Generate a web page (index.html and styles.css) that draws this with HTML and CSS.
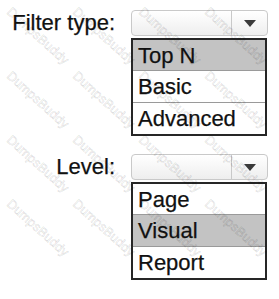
FILE: index.html
```html
<!doctype html>
<html lang="en">

<head>
    <meta charset="utf-8">
    <title>Filter</title>
    <link rel="stylesheet" href="styles.css">
</head>

<body>
    <div class="panel">
        <div class="field">
            <span class="label">Filter type:</span>
            <div class="select">
                <div class="select_value"></div>
                <div class="select_button"><span class="arrow"></span></div>
            </div>
            <ul class="options">
                <li class="selected">Top N</li>
                <li>Basic</li>
                <li>Advanced</li>
            </ul>
        </div>

        <div class="field second">
            <span class="label">Level:</span>
            <div class="select">
                <div class="select_value"></div>
                <div class="select_button"><span class="arrow"></span></div>
            </div>
            <ul class="options">
                <li>Page</li>
                <li class="selected">Visual</li>
                <li>Report</li>
            </ul>
        </div>
    </div>

    <div class="watermark">
        <span>DumpsBuddy</span><span>DumpsBuddy</span><span>DumpsBuddy</span><span>DumpsBuddy</span>
        <span>DumpsBuddy</span><span>DumpsBuddy</span><span>DumpsBuddy</span><span>DumpsBuddy</span>
        <span>DumpsBuddy</span><span>DumpsBuddy</span><span>DumpsBuddy</span><span>DumpsBuddy</span>
        <span>DumpsBuddy</span><span>DumpsBuddy</span><span>DumpsBuddy</span><span>DumpsBuddy</span>
    </div>
</body>

</html>
```
FILE: styles.css
```css
html,
body {
    margin: 0;
    background-color: white;
}

body {
    width: 279px;
    height: 299px;
    overflow: hidden;
    position: relative;
    font-family: "Liberation Sans", Arial, sans-serif;
    font-size: 22px;
    color: #111111;
    -webkit-text-stroke: 0.25px #111111;
}

.panel {
    padding-top: 10px;
}

.field {
    display: grid;
    grid-template-columns: 131px 137px;
}

.second {
    margin-top: 18px;
}

.label {
    grid-column: 1;
    text-align: right;
    padding-right: 16px;
    line-height: 26px;
}

.select {
    grid-column: 2;
    height: 24px;
    display: flex;
    border: 1px solid #c9c9c9;
    border-radius: 4px;
    background: linear-gradient(#ffffff, #eeeeee);
}

.select_value {
    flex: 1;
}

.select_button {
    width: 35px;
    border-left: 1px solid #c9c9c9;
    display: flex;
    align-items: center;
    justify-content: center;
}

.arrow {
    width: 0;
    height: 0;
    border-left: 6px solid transparent;
    border-right: 6px solid transparent;
    border-top: 7px solid #3a3a3a;
}

.options {
    grid-column: 2;
    list-style: none;
    margin: 2px 0 0 0;
    padding: 0;
    border: 2px solid #262626;
    width: 132px;
}

.options li {
    height: 31px;
    line-height: 31px;
    padding-left: 5px;
    border-top: 1px solid #9a9a9a;
}

.options li:first-child {
    border-top: none;
    height: 30px;
}

.selected {
    background-color: #c3c3c3;
}

.watermark {
    position: absolute;
    left: 4px;
    top: 4px;
    display: grid;
    grid-template-columns: repeat(4, 66px);
    grid-auto-rows: 64px;
    pointer-events: none;
}

.watermark span {
    display: block;
    font-size: 13px;
    color: transparent;
    -webkit-text-stroke: 0.6px rgba(0, 0, 0, 0.14);
    transform: rotate(42deg);
    transform-origin: left top;
    white-space: nowrap;
    margin-left: 10px;
}
```
